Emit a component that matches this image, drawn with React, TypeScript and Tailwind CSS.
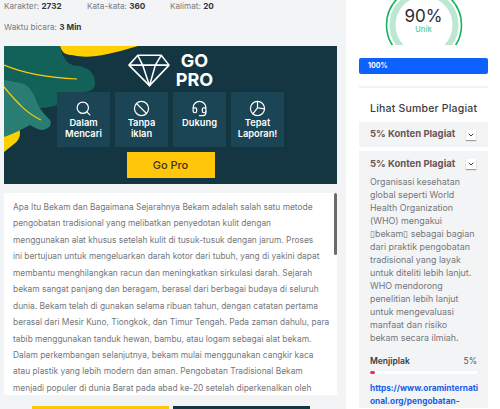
import { Search, Ban, Headset, ChevronDown, type LucideIcon } from 'lucide-react';

function PieIcon({ size = 15 }: { size?: number; strokeWidth?: number; className?: string }) {
  return (
    <svg width={size} height={size} viewBox="0 0 24 24" fill="none" stroke="currentColor" strokeWidth="1.7" strokeLinecap="round" className="mb-[1px]">
      <circle cx="12" cy="12" r="10" />
      <path d="M12 2V11L22 12.5M12 11L5.5 19.5" />
    </svg>
  );
}

const features: { icon: LucideIcon | typeof PieIcon; label: string }[] = [
  { icon: Search, label: 'Dalam Mencari' },
  { icon: Ban, label: 'Tanpa iklan' },
  { icon: Headset, label: 'Dukung' },
  { icon: PieIcon, label: 'Tepat Laporan!' },
];

const article = [
  'Apa Itu Bekam dan Bagaimana Sejarahnya Bekam adalah salah satu metode',
  'pengobatan tradisional yang melibatkan penyedotan kulit dengan',
  'menggunakan alat khusus setelah kulit di tusuk-tusuk dengan jarum. Proses',
  'ini bertujuan untuk mengeluarkan darah kotor dari tubuh, yang di yakini dapat',
  'membantu menghilangkan racun dan meningkatkan sirkulasi darah. Sejarah',
  'bekam sangat panjang dan beragam, berasal dari berbagai budaya di seluruh',
  'dunia. Bekam telah di gunakan selama ribuan tahun, dengan catatan pertama',
  'berasal dari Mesir Kuno, Tiongkok, dan Timur Tengah. Pada zaman dahulu, para',
  'tabib menggunakan tanduk hewan, bambu, atau logam sebagai alat bekam.',
  'Dalam perkembangan selanjutnya, bekam mulai menggunakan cangkir kaca',
  'atau plastik yang lebih modern dan aman. Pengobatan Tradisional Bekam',
  'menjadi populer di dunia Barat pada abad ke-20 setelah diperkenalkan oleh',
];

const source = [
  'Organisasi kesehatan',
  'global seperti World',
  'Health Organization',
  '(WHO) mengakui',
  '\u25AFbekam\u25AF sebagai bagian',
  'dari praktik pengobatan',
  'tradisional yang layak',
  'untuk diteliti lebih lanjut.',
  'WHO mendorong',
  'penelitian lebih lanjut',
  'untuk mengevaluasi',
  'manfaat dan risiko',
  'bekam secara ilmiah.',
];

function Stat({ label, value, className }: { label: string; value: string; className?: string }) {
  return (
    <span className={className}>
      <span className="text-[#777b80]">{label}: </span>
      <span className="font-bold text-[#33363a]">{value}</span>
    </span>
  );
}

function Chevron() {
  return (
    <span className="flex h-[10px] w-[10px] items-center justify-center bg-white shadow-[0_1px_1px_rgba(0,0,0,0.35)]">
      <ChevronDown size={8} strokeWidth={3} className="text-[#444]" />
    </span>
  );
}

export default function App() {
  return (
    <div className="flex h-[409px] w-[500px] overflow-hidden bg-[#f3f4f6] font-['Inter','Liberation_Sans',sans-serif]">
      {/* left column */}
      <div className="w-[346px] shrink-0 px-1">
        <div className="flex h-[12px] items-center text-[8.2px]">
          <Stat label="Karakter" value="2732" className="w-[83px]" />
          <Stat label="Kata-kata" value="360" className="w-[83px]" />
          <Stat label="Kalimat" value="20" />
        </div>
        <div className="mt-[9px] flex h-[12px] items-center text-[8.2px]">
          <Stat label="Waktu bicara" value="3 Min" />
        </div>

        <div className="relative mt-[13px] h-[138px] w-[333px] overflow-hidden bg-[#143642]">
          <svg className="absolute left-0 top-0" width="333" height="138" viewBox="0 0 333 138">
            <path d="M56 0C58 7 62 9 68 9C84 13 100 10 134 0Z" fill="#ffd000" />
            <path d="M0 58L10 72C18 84 18 92 10 98L0 106Z" fill="#ffd000" />
            <path d="M0 0H56C58 10 62 18 72 20C84 20 92 28 91 38C90 46 82 46 76 46C70 46 66 46 62 52C58 60 40 63 30 62L0 60Z" fill="#12625a" />
            <path d="M0 34L16 37C22 38 26 41 31 51C33 58 36 64 46 74C48 78 46 83 38 84C34 84 30 81 26 79C20 82 14 86 0 91Z" fill="#2a7d72" />
            <path d="M0 19C24 29 50 32 73 33" fill="none" stroke="#ffd000" strokeWidth="1.2" />
            <path d="M0 41C14 58 24 68 37 74" fill="none" stroke="#ffd000" strokeWidth="1.2" />
          </svg>

          <div className="relative flex flex-col items-center">
            <div className="flex h-[46px] items-center gap-[5px] pt-[2px]">
              <svg width="43" height="34" viewBox="0 0 44 34" fill="none" stroke="#fff" strokeWidth="1.6" strokeLinejoin="round">
                <path d="M1 12L10 2H34L42 12L22 33Z" />
                <path d="M1 12H42M15 12L22 33L28 12M10 2L15 12M34 2L28 12" />
              </svg>
              <div className="text-center text-[18px] font-bold leading-[19px] text-white">
                GO
                <br />
                PRO
              </div>
            </div>
            <div className="flex gap-[5px]">
              {features.map(f => (
                <div key={f.label} className="flex h-[55px] w-[53px] flex-col items-center bg-[#1b4454] px-[5px] pt-[8px] text-center text-[9.3px] font-semibold leading-[10.5px] text-white">
                  <f.icon size={17} strokeWidth={1.7} className="mb-[1px] shrink-0" />
                  {f.label}
                </div>
              ))}
            </div>
            <button className="mt-[5px] flex h-[26px] w-[88px] items-center justify-center bg-[#ffc60a] text-[11px] font-medium text-[#3a3520]">
              Go Pro
            </button>
          </div>
        </div>

        <div className="relative mt-[9px] h-[202px] w-[333px] overflow-hidden bg-white pl-[9px] pt-[6px]">
          {article.map(line => (
            <div key={line} className="h-[16.45px] whitespace-nowrap text-[8.4px] leading-[16.45px] text-[#74777b]">
              {line}
            </div>
          ))}
          <div className="absolute right-0 top-0 h-[62px] w-[3px] rounded-full bg-[#6b6b6b]" />
        </div>

        <div className="ml-[28px] mt-[11px] flex gap-1">
          <div className="h-[8px] w-[137px] bg-[#ffc60a]" />
          <div className="h-[8px] w-[137px] bg-[#143642]" />
        </div>
      </div>

      {/* right panel */}
      <div className="w-[154px] shrink-0 bg-white pl-[13px] pr-[12px]">
        <div className="relative h-[45px] overflow-hidden">
          <svg width="80" height="80" viewBox="0 0 80 80" fill="none" className="mx-auto mt-[-15px]">
            <circle cx="40" cy="40" r="37.5" stroke="#14b35e" strokeWidth="1.6" />
            <circle cx="40" cy="40" r="31.5" stroke="#bce8d2" strokeWidth="6" />
          </svg>
          <div className="absolute inset-x-0 top-[8px] text-center text-[17px] leading-[17px] text-[#2b2b30]">90%</div>
          <div className="absolute inset-x-0 top-[25px] text-center text-[7.5px] font-semibold leading-[9px] text-[#6fce9a]">Unik</div>
        </div>

        <div className="mt-[13px] flex h-[16px] items-center rounded-[2px] bg-[#0d62ff] pl-[9px] text-[7px] font-bold text-white">100%</div>
        <div className="mt-[12px] h-[2px] bg-[#f1f2f3]" />

        <div className="mt-[14px] h-[14px] pl-[11px] text-[10.5px] font-medium leading-[14px] tracking-[0.2px] text-[#3a3b40]">Lihat Sumber Plagiat</div>

        <div className="mt-[6px] flex h-[25px] items-center justify-between bg-[#f3f4f6] pl-[11px] pr-[12px]">
          <span className="text-[9.5px] font-bold text-[#6b5555]">5% Konten Plagiat</span>
          <Chevron />
        </div>

        <div className="mt-[4px] bg-[#f3f4f6] pl-[11px] pr-[11px] pt-[7px]">
          <div className="flex h-[12px] items-center justify-between pr-px">
            <span className="text-[9.5px] font-bold text-[#6b5555]">5% Konten Plagiat</span>
            <Chevron />
          </div>
          <div className="mt-[5px]">
            {source.map(line => (
              <div key={line} className="h-[13px] whitespace-nowrap text-[8.9px] leading-[13px] text-[#74777b]">
                {line}
              </div>
            ))}
          </div>
          <div className="mt-[11px] flex h-[12px] items-center justify-between text-[8.5px]">
            <span className="font-semibold text-[#3a3b40]">Menjiplak</span>
            <span className="text-[#55585c]">5%</span>
          </div>
          <div className="mt-[4px] h-[3px] bg-white">
            <div className="h-full w-[5px] rounded-full bg-[#e8344e]" />
          </div>
          <div className="mt-[8px] text-[8.3px] font-bold leading-[13px] text-[#1a5fe8]">
            <div className="whitespace-nowrap">https://www.oraminternati</div>
            <div className="whitespace-nowrap">onal.org/pengobatan-</div>
          </div>
        </div>
      </div>
    </div>
  );
}
